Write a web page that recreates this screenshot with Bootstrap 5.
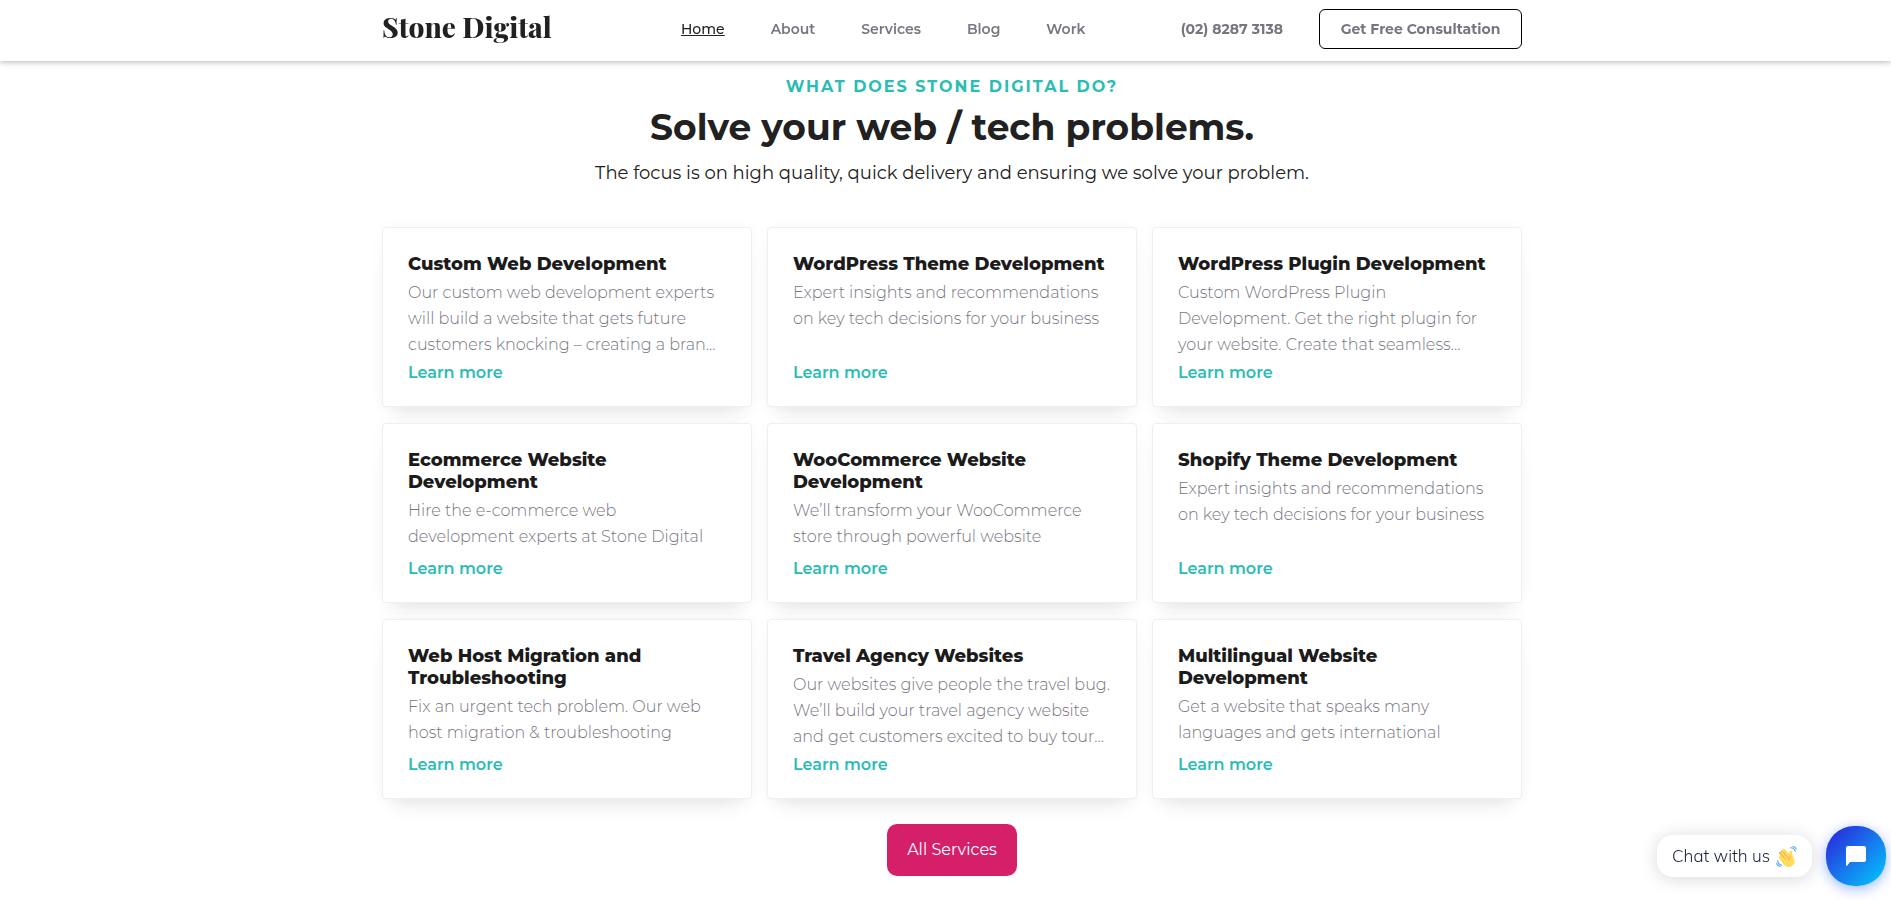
<!DOCTYPE html>
<html lang="en">
<head>
<meta charset="utf-8">
<meta name="viewport" content="width=device-width, initial-scale=1">
<title>Stone Digital</title>
<link href="https://cdn.jsdelivr.net/npm/bootstrap@5.3.0/dist/css/bootstrap.min.css" rel="stylesheet">
<style>
  :root { --ink: #212121; --muted: #77757f; --teal: #2abdb5; --pink: #d61f69; }
  body { font-family: Montserrat, Inter, sans-serif; color: var(--ink); background: #fff; overflow-x: hidden; }
  .page-wrap { max-width: 1140px; }
  .page-gutter { padding-left: 13px; }
  .site-header { background: #fff; box-shadow: 0 1px 6px rgba(0,0,0,.3); height: 61px; padding-bottom: 3px; }
  .brand { font-family: "Playfair Display", "Liberation Serif", serif; font-weight: 800; font-size: 28px; line-height: 40px; padding-bottom: 4px; color: var(--ink); width: 299px; }
  .main-nav { gap: 46px; font-size: 14px; font-weight: 600; line-height: 20px; }
  .main-nav a, .phone, .consult { color: var(--muted); }
  .main-nav a.active { color: var(--ink); font-weight: 500; text-decoration: underline; text-underline-offset: 1px; }
  .header-actions { gap: 36px; }
  .phone { font-size: 14px; font-weight: 700; }
  .consult { width: 203px; height: 40px; font-size: 14px; font-weight: 700; border: 1px solid #000; border-radius: 6px; padding: 0; }
  .intro-block { padding-top: 77px; }
  .eyebrow { font-size: 16px; line-height: 20px; font-weight: 700; letter-spacing: 2px; color: var(--teal); }
  .headline { font-size: 36px; line-height: 44px; font-weight: 700; margin: 8px 0 10px; }
  .intro { font-size: 18px; line-height: 28px; font-weight: 400; margin-bottom: 40px; }
  .service { border: 1px solid #efefef; border-radius: 4px; height: 180px; padding: 25px 25px 24px; background: #fff;
    box-shadow: 0 16px 20px -12px rgba(0,0,0,.1), 0 2px 16px rgba(0,0,0,.03); }
  .service h3 { font-size: 18px; line-height: 22px; font-weight: 800; margin: 0 0 5px; color: #1b1b1b; }
  .service p { font-size: 16px; line-height: 26px; font-weight: 300; color: var(--muted); margin: 0; }
  .service a { font-size: 16px; line-height: 22px; font-weight: 600; color: var(--teal); margin-top: auto; margin-bottom: -2px; }
  .service h3, .service p { white-space: nowrap; }
  .service-grid { --bs-gutter-x: 15px; --bs-gutter-y: 16px; }
  .all-btn { background: var(--pink); color: #fff; border: 0; border-radius: 10px; width: 130px; height: 52px; padding: 0; font-size: 16px; margin-top: 25px; }
  .chat { right: 5px; bottom: 14px; gap: 14px; }
  .chat-label { background: #fff; border: 0; border-radius: 16px; height: 42px; width: 155px; padding: 0; gap: 6px; color: #1c2540;
    font-family: Mulish, Lato, sans-serif; font-weight: 300; font-size: 17px; box-shadow: 0 2px 18px rgba(0,18,46,.16); }
  .chat-open { width: 60px; height: 60px; border: 0; padding: 0; border-radius: 28px; background: linear-gradient(135deg, #2a27da 5%, #00ccff 100%);
    box-shadow: 0 3px 13px rgba(0,77,255,.4); }
</style>
</head>
<body>
<header class="site-header page-gutter fixed-top d-flex align-items-center">
  <div class="page-wrap w-100 mx-auto d-flex align-items-center">
    <a class="brand text-decoration-none" href="#">Stone Digital</a>
    <nav class="main-nav d-flex" aria-label="Main">
      <a class="active" href="#">Home</a>
      <a class="text-decoration-none" href="#">About</a>
      <a class="text-decoration-none" href="#">Services</a>
      <a class="text-decoration-none" href="#">Blog</a>
      <a class="text-decoration-none" href="#">Work</a>
    </nav>
    <div class="header-actions ms-auto d-flex align-items-center">
      <a class="phone text-decoration-none" href="tel:0282873138">(02) 8287 3138</a>
      <button class="btn consult" type="button">Get Free Consultation</button>
    </div>
  </div>
</header>
<main class="page-gutter">
  <div class="intro-block page-wrap mx-auto text-center">
    <div class="eyebrow">WHAT DOES STONE DIGITAL DO?</div>
    <h1 class="headline">Solve your web / tech problems.</h1>
    <p class="intro">The focus is on high quality, quick delivery and ensuring we solve your problem.</p>
  </div>
  <div class="page-wrap mx-auto">
    <div class="row row-cols-3 service-grid">
      <div class="col"><article class="service d-flex flex-column align-items-start"><h3>Custom Web Development</h3><p>Our custom web development experts<br>will build a website that gets future<br>customers knocking – creating a bran…</p><a class="text-decoration-none" href="#">Learn more</a></article></div>
      <div class="col"><article class="service d-flex flex-column align-items-start"><h3>WordPress Theme Development</h3><p>Expert insights and recommendations<br>on key tech decisions for your business</p><a class="text-decoration-none" href="#">Learn more</a></article></div>
      <div class="col"><article class="service d-flex flex-column align-items-start"><h3>WordPress Plugin Development</h3><p>Custom WordPress Plugin<br>Development. Get the right plugin for<br>your website. Create that seamless…</p><a class="text-decoration-none" href="#">Learn more</a></article></div>
      <div class="col"><article class="service d-flex flex-column align-items-start"><h3>Ecommerce Website<br>Development</h3><p>Hire the e-commerce web<br>development experts at Stone Digital</p><a class="text-decoration-none" href="#">Learn more</a></article></div>
      <div class="col"><article class="service d-flex flex-column align-items-start"><h3>WooCommerce Website<br>Development</h3><p>We’ll transform your WooCommerce<br>store through powerful website</p><a class="text-decoration-none" href="#">Learn more</a></article></div>
      <div class="col"><article class="service d-flex flex-column align-items-start"><h3>Shopify Theme Development</h3><p>Expert insights and recommendations<br>on key tech decisions for your business</p><a class="text-decoration-none" href="#">Learn more</a></article></div>
      <div class="col"><article class="service d-flex flex-column align-items-start"><h3>Web Host Migration and<br>Troubleshooting</h3><p>Fix an urgent tech problem. Our web<br>host migration &amp; troubleshooting</p><a class="text-decoration-none" href="#">Learn more</a></article></div>
      <div class="col"><article class="service d-flex flex-column align-items-start"><h3>Travel Agency Websites</h3><p>Our websites give people the travel bug.<br>We’ll build your travel agency website<br>and get customers excited to buy tour…</p><a class="text-decoration-none" href="#">Learn more</a></article></div>
      <div class="col"><article class="service d-flex flex-column align-items-start"><h3>Multilingual Website<br>Development</h3><p>Get a website that speaks many<br>languages and gets international</p><a class="text-decoration-none" href="#">Learn more</a></article></div>
    </div>
    <div class="text-center"><button class="btn all-btn" type="button">All Services</button></div>
  </div>
</main>
<div class="chat position-fixed d-flex align-items-center">
  <button class="chat-label d-flex align-items-center justify-content-center" type="button">Chat with us
    <svg width="21" height="21" viewBox="0 0 36 36" aria-hidden="true">
      <path fill="#EF9645" d="M4.9 11.4c.9-1.2 2.9-1.4 4.1-.2-.7-1.4-.3-3 1-3.7 1.3-.8 3-.3 3.8.9L24 18l-10 10z"/>
      <path fill="#FFDC5D" d="M10 16.600c-1-1.300-.8-3 .3-3.900 1.200-1 2.900-.8 3.900.4l-3-4.200c-.8-1.200-.5-2.800.7-3.600 1.200-.9 2.800-.6 3.700.6l6.900 9.700c.5-3 .2-5.200.9-6.800 1-2.100 4.200-1.400 4.400.8.2 2.400-.2 4.100.6 6.800l3 7.500c2.200 5.500-1.300 10.300-6.700 11.700-4.500 1.200-9-.4-11.900-4.200l-7.600-10.200c-.8-1.200-.5-2.800.6-3.600 1.200-.9 2.900-.5 3.700.6z"/>
      <path fill="#FFDC5D" d="M6 15 9 11l6-4 9 7 2 10-9 5z"/>
      <path fill="none" stroke="#EF9645" stroke-width="1.200" stroke-linecap="round" d="m9 14 7 9M13 11l7 9M25 17c-3 2-4 5-2 8"/>
      <path fill="none" stroke="#5DADEC" stroke-width="2" stroke-linecap="round" d="M25 3c4 0 7 2 8 6M29 1c3 0 5 2 6 4M3 25c0 4 2 7 7 8M1 30c1 3 3 4 6 5"/>
    </svg>
  </button>
  <button class="chat-open d-flex align-items-center justify-content-center" type="button" aria-label="Open chat">
    <svg width="20" height="20" viewBox="0 0 20 20" aria-hidden="true"><path fill="#fff" d="M2 0h16a2 2 0 0 1 2 2v12a2 2 0 0 1-2 2H4l-2.700 3.500C.8 20.200 0 20 0 19V2a2 2 0 0 1 2-2z"/></svg>
  </button>
</div>
<script src="https://cdn.jsdelivr.net/npm/bootstrap@5.3.0/dist/js/bootstrap.bundle.min.js"></script>
</body>
</html>
